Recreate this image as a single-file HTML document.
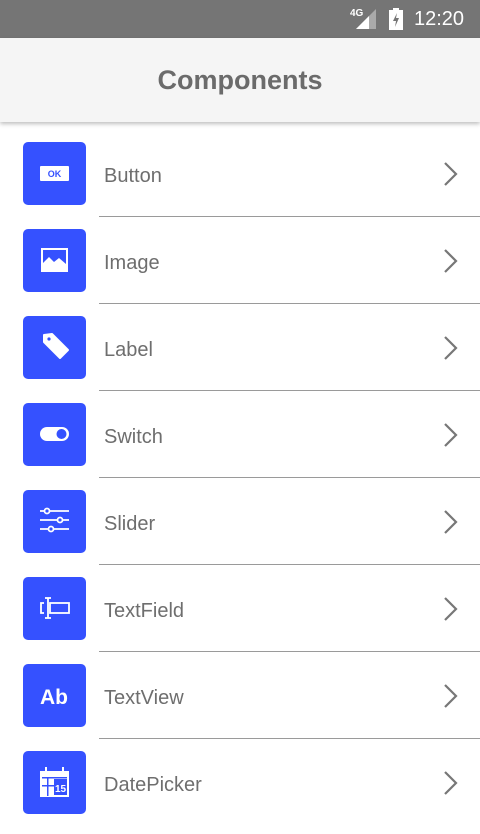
<!DOCTYPE html><html><head><meta charset="utf-8"><style>
*{margin:0;padding:0;box-sizing:border-box}
body{width:480px;height:800px;overflow:hidden;background:#fff;font-family:"Liberation Sans",sans-serif;position:relative}
.sb{position:absolute;top:0;left:0;width:480px;height:38px;background:#757575;color:#fff}
.hd{position:absolute;top:38px;left:0;width:480px;height:84px;background:#f5f5f5;box-shadow:0 2px 4px rgba(0,0,0,.25);text-align:center;line-height:84px;font-size:27px;font-weight:bold;color:#6b6b6b;z-index:2}
.row{position:absolute;left:0;width:480px;height:87px}
.ic{position:absolute;left:23px;top:4px;width:63px;height:63px;background:#3551ff;border-radius:5px}
.ic svg{position:absolute;left:0;top:0}
.t{position:absolute;left:104px;top:25px;font-size:20px;color:#6e6e6e;line-height:26px}
.ch{position:absolute;left:440px;top:22px}
.sep{position:absolute;left:99px;right:0;top:78px;height:1px;background:#9a9a9a}
</style></head><body>
<div class="sb">
<span style="position:absolute;left:350px;top:8px;font-size:10px;font-weight:bold">4G</span>
<svg style="position:absolute;left:354px;top:9px" width="24" height="20"><polygon points="22,0 22,20 2,20" fill="#aaa"/><polygon points="15,7 15,20 2,20" fill="#fff"/></svg>
<svg style="position:absolute;left:388px;top:8px" width="16" height="22"><rect x="5" y="0" width="6" height="3" fill="#fff"/><rect x="1" y="2" width="14" height="20" fill="#fff"/><polygon points="9,5 5,13 8,13 7,19 11,10 8,10" fill="#757575"/></svg>
<span style="position:absolute;left:414px;top:8px;font-size:20px">12:20</span>
</div>
<div class="hd">Components</div>

<div class="row" style="top:138px"><div class="ic"><svg width="63" height="63"><rect x="17" y="24" width="29" height="15" rx="1" fill="#fff"/><text x="31.5" y="35" font-size="9" font-weight="bold" fill="#3551ff" text-anchor="middle" font-family="Liberation Sans">OK</text></svg></div><div class="t">Button</div><svg class="ch" width="20" height="28"><polyline points="5,3 16,14 5,25" fill="none" stroke="#777" stroke-width="2.2"/></svg><div class="sep"></div></div>

<div class="row" style="top:225px"><div class="ic"><svg width="63" height="63"><rect x="18" y="19" width="27" height="24" fill="#fff"/><rect x="20" y="21" width="23" height="17" fill="#3551ff"/><polygon points="20,38 20,34 26,28 31,33 36,29 43,35 43,38" fill="#fff"/></svg></div><div class="t">Image</div><svg class="ch" width="20" height="28"><polyline points="5,3 16,14 5,25" fill="none" stroke="#777" stroke-width="2.2"/></svg><div class="sep"></div></div>

<div class="row" style="top:312px"><div class="ic"><svg width="63" height="63"><path d="M21 19 L29 18 L45 34 L37 42 L21 26 Z" fill="#fff" stroke="#fff" stroke-width="2" stroke-linejoin="round"/><circle cx="26" cy="23" r="1.6" fill="#3551ff"/></svg></div><div class="t">Label</div><svg class="ch" width="20" height="28"><polyline points="5,3 16,14 5,25" fill="none" stroke="#777" stroke-width="2.2"/></svg><div class="sep"></div></div>

<div class="row" style="top:399px"><div class="ic"><svg width="63" height="63"><rect x="17" y="24" width="29" height="14" rx="7" fill="#fff"/><circle cx="38.5" cy="31" r="5" fill="#3551ff"/></svg></div><div class="t">Switch</div><svg class="ch" width="20" height="28"><polyline points="5,3 16,14 5,25" fill="none" stroke="#777" stroke-width="2.2"/></svg><div class="sep"></div></div>

<div class="row" style="top:486px"><div class="ic"><svg width="63" height="63" stroke="#fff" stroke-width="1.8" fill="#3551ff"><line x1="17" y1="21" x2="46" y2="21"/><line x1="17" y1="30" x2="46" y2="30"/><line x1="17" y1="39" x2="46" y2="39"/><circle cx="24" cy="21" r="2.5"/><circle cx="37" cy="30" r="2.5"/><circle cx="28" cy="39" r="2.5"/></svg></div><div class="t">Slider</div><svg class="ch" width="20" height="28"><polyline points="5,3 16,14 5,25" fill="none" stroke="#777" stroke-width="2.2"/></svg><div class="sep"></div></div>

<div class="row" style="top:573px"><div class="ic"><svg width="63" height="63" fill="none" stroke="#fff" stroke-width="1.8"><rect x="27" y="26" width="19" height="10"/><line x1="25" y1="21" x2="25" y2="41"/><line x1="22" y1="21" x2="28" y2="21"/><line x1="22" y1="41" x2="28" y2="41"/><path d="M21 26 h-3 v10 h3"/></svg></div><div class="t">TextField</div><svg class="ch" width="20" height="28"><polyline points="5,3 16,14 5,25" fill="none" stroke="#777" stroke-width="2.2"/></svg><div class="sep"></div></div>

<div class="row" style="top:660px"><div class="ic"><svg width="63" height="63"><text x="31" y="40" font-size="21" font-weight="bold" fill="#fff" text-anchor="middle" font-family="Liberation Sans">Ab</text></svg></div><div class="t">TextView</div><svg class="ch" width="20" height="28"><polyline points="5,3 16,14 5,25" fill="none" stroke="#777" stroke-width="2.2"/></svg><div class="sep"></div></div>

<div class="row" style="top:747px"><div class="ic"><svg width="63" height="63"><rect x="17" y="20" width="29" height="26" fill="#fff"/><rect x="22" y="16" width="2" height="6" fill="#fff"/><rect x="39" y="16" width="2" height="6" fill="#fff"/><rect x="19" y="26" width="25" height="1.5" fill="#3551ff"/><rect x="19" y="34" width="12" height="1.5" fill="#3551ff"/><rect x="24" y="27" width="1.5" height="18" fill="#3551ff"/><rect x="31" y="28" width="13" height="16" fill="#3551ff"/><text x="37.5" y="41" font-size="10" font-weight="bold" fill="#fff" text-anchor="middle" font-family="Liberation Sans">15</text></svg></div><div class="t">DatePicker</div><svg class="ch" width="20" height="28"><polyline points="5,3 16,14 5,25" fill="none" stroke="#777" stroke-width="2.2"/></svg></div>
</body></html>
